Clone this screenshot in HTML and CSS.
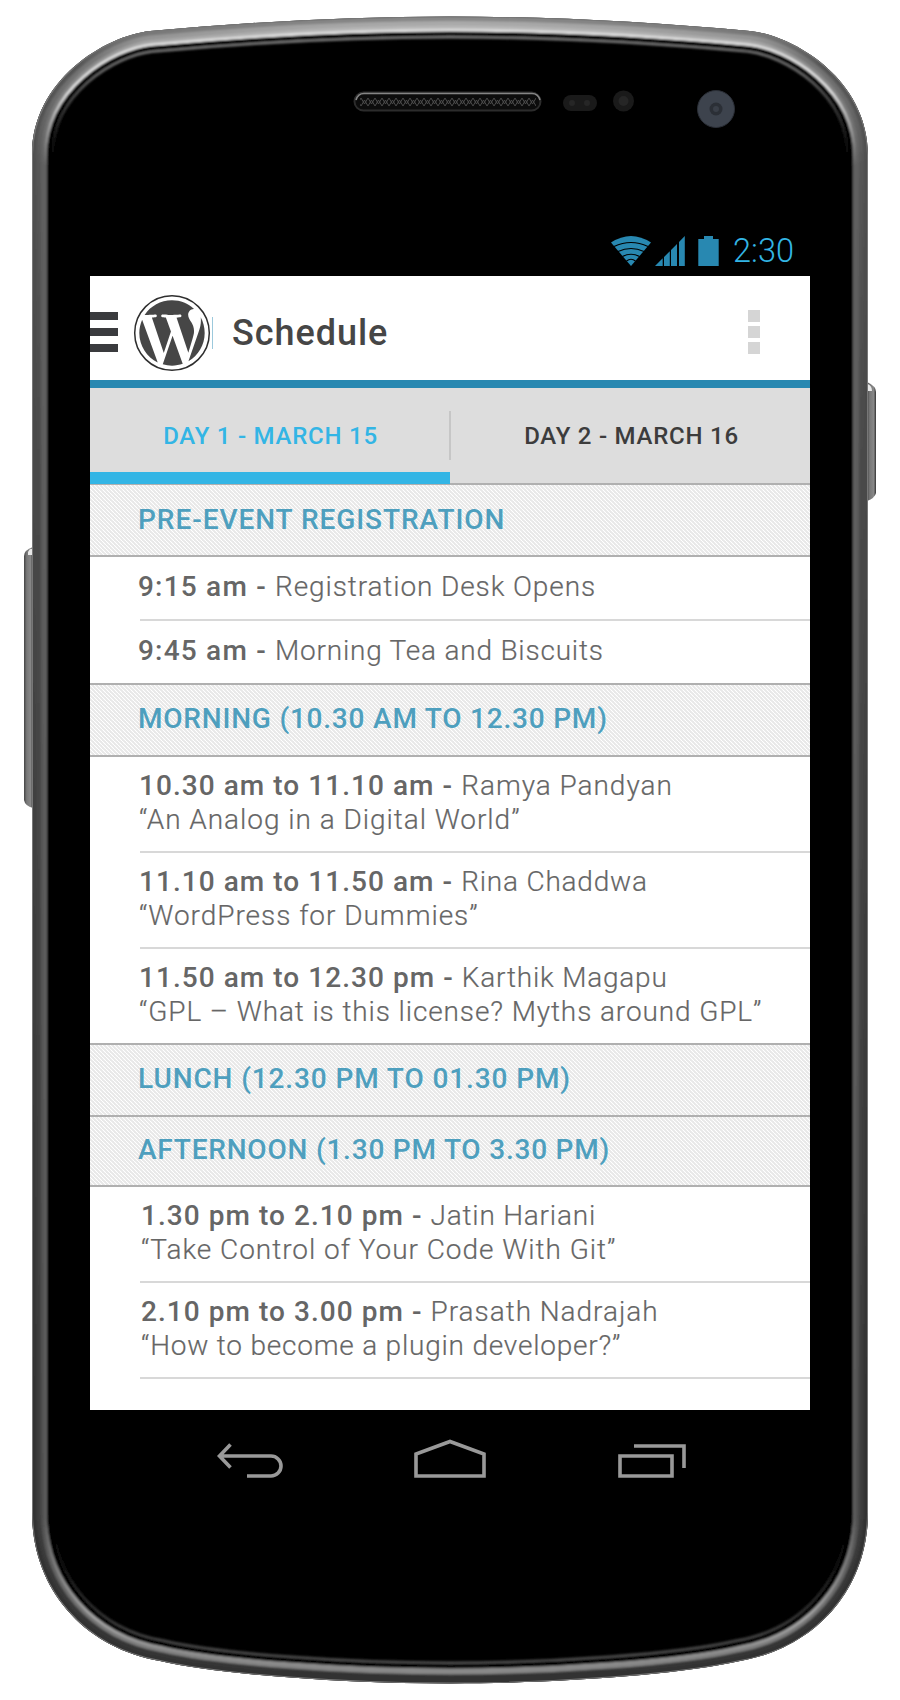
FILE: index.html
```
<!DOCTYPE html>
<html lang="en">
<head>
<meta charset="utf-8">
<title>Schedule</title>
<link rel="stylesheet" href="styles.css">
</head>
<body>
<div class="phone">
  <svg class="shell" viewBox="0 0 900 1700" width="900" height="1700" aria-hidden="true">
    <defs>
      <path id="body" d="M450 16.5C350 16.5 250 22 150 31C105 36 32 80 32 155V1512C32 1590 85 1648 160 1661C220 1675 350 1683.5 450 1683.5C550 1683.5 680 1675 740 1661C815 1648 868 1590 868 1512V155C868 80 795 36 750 31C650 22 550 16.5 450 16.5Z"/>
      <clipPath id="bodyClip"><use href="#body"/></clipPath>
      <filter id="soft" x="0" y="0" width="900" height="1700" filterUnits="userSpaceOnUse"><feGaussianBlur stdDeviation="0.8"/></filter>
      <linearGradient id="gA" gradientUnits="userSpaceOnUse" x1="0" y1="16" x2="0" y2="1684"><stop offset="0" stop-color="#8a8a8a"/><stop offset=".03" stop-color="#555"/><stop offset=".09" stop-color="#505050"/><stop offset=".9" stop-color="#303030"/><stop offset="1" stop-color="#333"/></linearGradient>
      <linearGradient id="gB" gradientUnits="userSpaceOnUse" x1="0" y1="16" x2="0" y2="1684"><stop offset="0" stop-color="#b4b4b4"/><stop offset=".025" stop-color="#777"/><stop offset=".09" stop-color="#565656"/><stop offset=".3" stop-color="#484848"/><stop offset=".9" stop-color="#3c3c3c"/><stop offset="1" stop-color="#333"/></linearGradient>
      <linearGradient id="gC" gradientUnits="userSpaceOnUse" x1="0" y1="16" x2="0" y2="1684"><stop offset="0" stop-color="#c4c4c4"/><stop offset=".03" stop-color="#8c8c8c"/><stop offset=".09" stop-color="#606060"/><stop offset=".3" stop-color="#5c5c5c"/><stop offset=".9" stop-color="#505050"/><stop offset="1" stop-color="#8c8c8c"/></linearGradient>
      <linearGradient id="gD" gradientUnits="userSpaceOnUse" x1="0" y1="16" x2="0" y2="1684"><stop offset="0" stop-color="#e4e4e4"/><stop offset=".045" stop-color="#e8e8e8"/><stop offset=".09" stop-color="#606060"/><stop offset=".9" stop-color="#606060"/><stop offset=".96" stop-color="#aaa"/><stop offset="1" stop-color="#858585"/></linearGradient>
      <linearGradient id="gL" gradientUnits="userSpaceOnUse" x1="0" y1="16" x2="0" y2="1684"><stop offset="0" stop-color="#808080"/><stop offset=".035" stop-color="#666"/><stop offset=".085" stop-color="#000"/><stop offset=".91" stop-color="#000"/><stop offset=".97" stop-color="#444"/><stop offset="1" stop-color="#555"/></linearGradient>
      <linearGradient id="key" x1="0" x2="1" y1="0" y2="0"><stop offset="0" stop-color="#444"/><stop offset=".3" stop-color="#777"/><stop offset=".75" stop-color="#888"/><stop offset="1" stop-color="#333"/></linearGradient>
      <pattern id="mesh" width="7" height="8" patternUnits="userSpaceOnUse" x="361" y="98"><path d="M0 0L3.5 6L7 0M0 8L3.5 2L7 8" fill="none" stroke="#4a4a4a" stroke-width="1"/></pattern>
    </defs>
    <path d="M33 547Q24 550 24 556V800Q25 806 33 808Z" fill="url(#key)"/>
    <path d="M28 552Q30 548 32 549V555H28Z" fill="#e8e8e8"/>
    <path d="M867 382Q876 386 876 392V493Q875 498 867 501Z" fill="url(#key)"/>
    <path d="M868 384Q872 386 872 391H868Z" fill="#e8e8e8"/>
    <use href="#body" fill="#000"/>
    <g clip-path="url(#bodyClip)">
      <g fill="none" filter="url(#soft)">
        <use href="#body" stroke="url(#gL)" stroke-width="44"/>
        <use href="#body" stroke="#000" stroke-width="39"/>
        <use href="#body" stroke="url(#gD)" stroke-width="30"/>
        <use href="#body" stroke="url(#gC)" stroke-width="25"/>
        <use href="#body" stroke="url(#gB)" stroke-width="18"/>
        <use href="#body" stroke="url(#gA)" stroke-width="9"/>
      </g>
      <use href="#body" fill="none" stroke="#777" stroke-width="2"/>
    </g>
    <rect x="354.500" y="92.500" width="186" height="18" rx="9" fill="#0c0c0c" stroke="#2c2c2c" stroke-width="2"/>
    <rect x="360" y="98" width="176" height="8" fill="url(#mesh)"/>
    <path d="M356 100Q358 93.500 364 93.500H532Q538 93.500 540 100" fill="none" stroke="#858585" stroke-width="1.600"/>
    <rect x="563" y="95" width="34" height="16" rx="8" fill="#1a1a1a"/>
    <circle cx="572" cy="103" r="3" fill="#262626"/><circle cx="587" cy="103" r="3" fill="#262626"/>
    <circle cx="623.500" cy="101" r="10.500" fill="#1a1a1a"/><circle cx="623.500" cy="101" r="5" fill="#262626"/>
    <circle cx="716" cy="109" r="18.500" fill="#3d434d" stroke="#2a2e36" stroke-width="1"/><circle cx="716" cy="109" r="6.500" fill="#2b2f36"/><circle cx="716" cy="109" r="3" fill="#3a3f48"/>
  </svg>

  <div class="display">
    <div class="status">
      <svg class="status-icons" viewBox="0 0 110 30" width="110" height="30" aria-hidden="true">
        <g fill="#2888b1">
          <path d="M0 6.500Q20-6.500 40 6.500L20 30Z"/>
          <path d="M44 30L51.700 22.300V30ZM53 30V21L58.800 15.200V30ZM60 30V14L66 8V30ZM68 30V6L73.800 0V30Z"/>
          <path d="M87.300 3H93V0H102V3H107.700V30H87.300Z"/>
        </g>
        <path d="M3 10.500Q20 2.500 37 10.500M7 15.500Q20 9.500 33 15.500M11.500 20.500Q20 16 28.500 20.500M15.500 25Q20 21.500 24.500 25" fill="none" stroke="#000" stroke-width="1.200"/>
      </svg>
      <span class="clock">2:30</span>
    </div>

    <main class="screen">
      <header class="bar">
        <div class="menu"><i></i><i></i><i></i></div>
        <svg class="logo" viewBox="0 0 78 78" width="78" height="78" aria-hidden="true">
          <circle cx="39" cy="39" r="37.300" fill="none" stroke="#2e2e2e" stroke-width="1.500"/>
          <path transform="translate(2.640 2.640) scale(3.030)" fill="#464646" d="M21.469 6.825c.84 1.537 1.318 3.300 1.318 5.175 0 3.979-2.156 7.456-5.363 9.325l3.295-9.527c.615-1.540.82-2.771.82-3.864 0-.405-.026-.78-.07-1.110m-7.981.105c.647-.03 1.232-.105 1.232-.105.582-.075.514-.93-.067-.899 0 0-1.755.135-2.880.135-1.064 0-2.850-.15-2.850-.15-.585-.03-.661.855-.075.885 0 0 .54.061 1.125.09l1.680 4.605-2.370 7.080L5.354 6.900c.649-.03 1.234-.1 1.234-.1.585-.075.516-.93-.065-.896 0 0-1.746.138-2.874.138-.2 0-.438-.008-.69-.015C4.911 3.150 8.235 1.215 12 1.215c2.809 0 5.365 1.072 7.286 2.833-.046-.003-.091-.009-.141-.009-1.060 0-1.812.923-1.812 1.914 0 .89.513 1.643 1.060 2.531.411.72.89 1.643.89 2.977 0 .915-.354 1.994-.821 3.479l-1.075 3.585-3.900-11.610.001.014zM12 22.784c-1.059 0-2.081-.153-3.048-.437l3.237-9.406 3.315 9.087c.024.053.05.101.078.149-1.120.393-2.325.609-3.582.609M1.211 12c0-1.564.336-3.050.935-4.390L7.290 21.709C3.694 19.960 1.212 16.271 1.211 12"/>
        </svg>
        <span class="edge"></span>
        <h1 class="title">Schedule</h1>
        <div class="overflow"><i></i><i></i><i></i></div>
      </header>
      <nav class="tabs">
        <div class="tab tab-active">DAY 1 - MARCH 15</div>
        <div class="tab">DAY 2 - MARCH 16</div>
      </nav>

      <h2 class="section section-first">PRE-EVENT REGISTRATION</h2>
      <ul class="list list-single">
        <li><p><b>9:15 am - </b><span class="snug">Registration Desk Opens</span></p></li>
        <li><p><b>9:45 am - </b><span class="tight">Morning Tea and Biscuits</span></p></li>
      </ul>
      <h2 class="section tight">MORNING (10.30 AM TO 12.30 PM)</h2>
      <ul class="list">
        <li><p><b>10.30 am to 11.10 am - </b><span>Ramya Pandyan</span></p><p>“An Analog in a Digital World”</p></li>
        <li><p><b>11.10 am to 11.50 am - </b><span class="tight">Rina Chaddwa</span></p><p>“WordPress for Dummies”</p></li>
        <li><p><b>11.50 am to 12.30 pm - </b><span class="tight">Karthik Magapu</span></p><p class="snug">“GPL – What is this license? Myths around GPL”</p></li>
      </ul>
      <h2 class="section snug">LUNCH (12.30 PM TO 01.30 PM)</h2>
      <h2 class="section section-short tight">AFTERNOON (1.30 PM TO 3.30 PM)</h2>
      <ul class="list list-open">
        <li><p><b>1.30 pm to 2.10 pm - </b><span class="tight">Jatin Hariani</span></p><p>“Take Control of Your Code With Git”</p></li>
        <li><p><b>2.10 pm to 3.00 pm - </b><span>Prasath Nadrajah</span></p><p class="tight">“How to become a plugin developer?”</p></li>
      </ul>
    </main>

    <div class="keys">
      <svg viewBox="0 0 720 100" width="720" height="100" aria-hidden="true" fill="none" stroke="#999" stroke-width="3.600">
        <path d="M140.500 34.500L129.500 46L140.500 57.500M129.500 46H181A10 10 0 0 1 181 66H157" />
        <path d="M326 66V44L360 31.500L394 44V66Z"/>
        <path d="M530 46H582V66H530ZM544 36H594V58"/>
      </svg>
    </div>
  </div>
</div>
</body>
</html>
```
FILE: styles.css
```
body { margin: 0; background: #fff; font-family: Roboto, sans-serif; }
.phone { position: relative; width: 900px; height: 1700px; overflow: hidden; }
.shell { position: absolute; left: 0; top: 0; display: block; }
.display { position: relative; width: 720px; margin: 0 auto; padding-top: 226px; }
.status { height: 50px; display: flex; justify-content: flex-end; align-items: flex-start; padding-right: 16px; box-sizing: border-box; }
.status-icons { margin: 10px 12px 0 0; }
.clock { font-size: 32.5px; font-weight: 300; line-height: 40px; margin-top: 5px; color: #33b5e5; white-space: nowrap; }
.screen { height: 1134px; background: #fff; color: #666; }
.bar { height: 104px; box-sizing: content-box; border-bottom: 8px solid #2888b1; display: flex; align-items: center; }
.menu { display: grid; gap: 8px; width: 28px; margin: 8px 15px 0 0; }
.menu i { height: 8px; background: #3a3b3e; }
.logo { flex: none; margin-top: 9px; }
.edge { width: 1px; height: 32px; margin: 10px 19px 0 1px; background: #9cc9dc; }
.title { margin: 9px 0 0; font-size: 36px; font-weight: 500; color: #464646; line-height: 44px; letter-spacing: .95px; }
.overflow { display: grid; gap: 4px; margin: 8px 50px 0 auto; width: 12px; }
.overflow i { height: 12px; background: #d5d5d5; }
.tabs { display: grid; grid-template-columns: 1fr 1fr; height: 97px; background: linear-gradient(#c6c6c6, #c6c6c6) 359px 23px / 2px 49px no-repeat #ddd; }
.tab { box-sizing: border-box; display: flex; justify-content: center; padding: 32px 0 0 3px; border-bottom: 2px solid #b0b0b0; font-size: 24px; font-weight: 500; line-height: 32px; color: #3c3c3c; letter-spacing: .76px; }
.tab-active { padding-left: 1px; color: #33b5e5; border-bottom: 1px solid #b0b0b0; box-shadow: inset 0 -12px #33b5e5; }
.section { box-sizing: border-box; height: 74px; margin: 0; padding: 17px 0 0 48px; border: solid #b0b0b0; border-width: 2px 0; font-size: 28px; font-weight: 500; line-height: 34px; color: #4e9fbe; letter-spacing: .95px; background: linear-gradient(45deg, #e8e8e8 36%, #fff 46%, #fff 54%, #e8e8e8 64%) 0 0 / 4px 4px; }
.section-first { height: 72px; padding-top: 18px; border-top: 0; }
.section-short { height: 70px; padding-top: 16px; border-top: 0; }
.list { list-style: none; margin: 0; padding: 0 0 0 50px; font-size: 28px; font-weight: 300; line-height: 34px; letter-spacing: .96px; -webkit-text-stroke: .2px #666; }
.list li { box-sizing: border-box; height: 96px; padding-top: 12px; border-bottom: 2px solid #d8d8d8; }
.list li:last-child { height: 94px; border-bottom: 0; }
.list-single li { height: 64px; padding-top: 13px; }
.list-single li:last-child { height: 62px; }
.list-open li:last-child { height: 96px; border-bottom: 2px solid #d8d8d8; }
.list p { margin: 0 0 0 -1px; white-space: pre; }
.list-single p { margin-left: -2px; }
.list-open p { margin-left: 1px; }
.list b { font-weight: 500; letter-spacing: 1.05px; -webkit-text-stroke: 0; }
.list-single b { letter-spacing: 1.2px; }
.snug { letter-spacing: .89px; }
.tight { letter-spacing: .79px; }
.keys { height: 100px; }
.keys svg { display: block; }
```
